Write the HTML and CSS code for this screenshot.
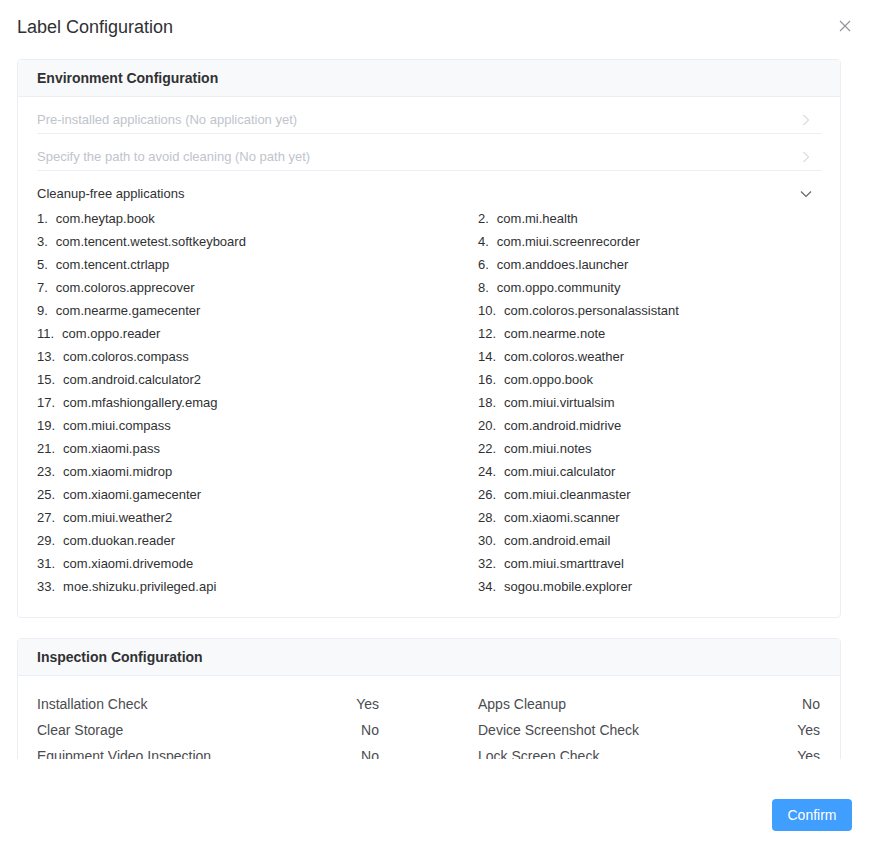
FILE: index.html
```html
<!DOCTYPE html>
<html lang="en">
<head>
    <meta charset="UTF-8">
    <meta name="viewport" content="width=device-width, initial-scale=1.0">
    <title>Label Configuration</title>
    <link rel="stylesheet" href="styles.css">
</head>
<body>
    <div class="dialog">
        <div class="dialog-header">
            <span class="dialog-title">Label Configuration</span>
            <button class="close-btn" aria-label="Close">
                <svg width="12" height="12" viewBox="0 0 12 12"><path d="M1 1L11 11M11 1L1 11" stroke="#909399" stroke-width="1.1" fill="none"/></svg>
            </button>
        </div>

        <div class="dialog-body">
            <div class="card">
                <div class="card-header">Environment Configuration</div>
                <div class="card-body env">
                    <div class="collapse-row disabled">
                        <span>Pre-installed applications (No application yet)</span>
                        <svg class="arrow" width="12" height="12" viewBox="0 0 12 12"><path d="M3.5 1L8.5 6L3.5 11" stroke="#c0c4cc" stroke-width="1" fill="none"/></svg>
                    </div>
                    <div class="collapse-row disabled">
                        <span>Specify the path to avoid cleaning (No path yet)</span>
                        <svg class="arrow" width="12" height="12" viewBox="0 0 12 12"><path d="M3.5 1L8.5 6L3.5 11" stroke="#c0c4cc" stroke-width="1" fill="none"/></svg>
                    </div>
                    <div class="collapse-row open">
                        <span>Cleanup-free applications</span>
                        <svg class="arrow" width="12" height="12" viewBox="0 0 12 12"><path d="M1 3.5L6 8.5L11 3.5" stroke="#606266" stroke-width="1.1" fill="none"/></svg>
                    </div>
                    <ol class="app-list"></ol>
                </div>
            </div>

            <div class="card">
                <div class="card-header">Inspection Configuration</div>
                <div class="card-body inspect">
                    <div class="check-grid">
                        <div class="check"><span>Installation Check</span><span>Yes</span></div>
                        <div class="check"><span>Apps Cleanup</span><span>No</span></div>
                        <div class="check"><span>Clear Storage</span><span>No</span></div>
                        <div class="check"><span>Device Screenshot Check</span><span>Yes</span></div>
                        <div class="check"><span>Equipment Video Inspection</span><span>No</span></div>
                        <div class="check"><span>Lock Screen Check</span><span>Yes</span></div>
                        <div class="check"><span>Network Check</span><span>Yes</span></div>
                        <div class="check"><span>Battery Check</span><span>No</span></div>
                    </div>
                </div>
            </div>
        </div>

        <div class="dialog-footer">
            <button class="confirm-btn">Confirm</button>
        </div>
    </div>

    <script>
        const apps = [
            'com.heytap.book', 'com.mi.health',
            'com.tencent.wetest.softkeyboard', 'com.miui.screenrecorder',
            'com.tencent.ctrlapp', 'com.anddoes.launcher',
            'com.coloros.apprecover', 'com.oppo.community',
            'com.nearme.gamecenter', 'com.coloros.personalassistant',
            'com.oppo.reader', 'com.nearme.note',
            'com.coloros.compass', 'com.coloros.weather',
            'com.android.calculator2', 'com.oppo.book',
            'com.mfashiongallery.emag', 'com.miui.virtualsim',
            'com.miui.compass', 'com.android.midrive',
            'com.xiaomi.pass', 'com.miui.notes',
            'com.xiaomi.midrop', 'com.miui.calculator',
            'com.xiaomi.gamecenter', 'com.miui.cleanmaster',
            'com.miui.weather2', 'com.xiaomi.scanner',
            'com.duokan.reader', 'com.android.email',
            'com.xiaomi.drivemode', 'com.miui.smarttravel',
            'moe.shizuku.privileged.api', 'sogou.mobile.explorer'
        ];

        const list = document.querySelector('.app-list');
        apps.forEach((name, i) => {
            const li = document.createElement('li');
            li.innerHTML = `<span class="num">${i + 1}.</span><span>${name}</span>`;
            list.appendChild(li);
        });
    </script>
</body>
</html>
```

FILE: styles.css
```css
* {
    margin: 0;
    padding: 0;
    box-sizing: border-box;
    font-family: 'Liberation Sans', Arial, sans-serif;
}

body {
    background: #fff;
    color: #606266;
}

.dialog {
    width: 869px;
    height: 848px;
    display: flex;
    flex-direction: column;
}

.dialog-header {
    display: flex;
    justify-content: space-between;
    align-items: center;
    padding: 17px 18px 0 17px;
    height: 37px;
}

.dialog-title {
    font-size: 18px;
    line-height: 20px;
    color: #303133;
}

.close-btn {
    border: none;
    background: none;
    width: 12px;
    height: 12px;
    display: flex;
    margin-top: -2px;
    cursor: pointer;
}

.dialog-body {
    height: 722px;
    overflow: hidden;
    padding: 22px 28px 0 17px;
}

.card {
    border: 1px solid #ebeef5;
    border-radius: 4px;
    margin-bottom: 20px;
}

.card-header {
    height: 37px;
    line-height: 36px;
    padding: 0 19px;
    background: #f8f9fb;
    border-bottom: 1px solid #ebeef5;
    font-size: 14px;
    font-weight: bold;
    color: #303133;
}

.card-body {
    padding: 0 19px 19px;
}

.collapse-row {
    display: flex;
    justify-content: space-between;
    align-items: center;
    padding: 14px 0 4px;
    line-height: 18px;
    font-size: 13px;
    border-bottom: 1px solid #ebeef5;
    height: 37px;
}

.collapse-row .arrow {
    margin-right: 9px;
}

.collapse-row.disabled {
    color: #c0c4cc;
}

.collapse-row.open {
    border-bottom: none;
    height: 36px;
    color: #303133;
}

.app-list {
    list-style: none;
    display: grid;
    grid-template-columns: 342px 342px;
    column-gap: 99px;
    font-size: 13px;
    color: #303133;
}

.app-list li {
    height: 23px;
    line-height: 23px;
    white-space: nowrap;
}

.app-list .num {
    margin-right: 8px;
}

.inspect {
    padding-top: 15px;
}

.check-grid {
    display: grid;
    grid-template-columns: 342px 342px;
    column-gap: 99px;
    font-size: 14px;
}

.check {
    display: flex;
    justify-content: space-between;
    height: 26px;
    line-height: 26px;
    color: #4a4c50;
}

.dialog-footer {
    display: flex;
    justify-content: flex-end;
    padding: 40px 17px 0;
}

.confirm-btn {
    width: 80px;
    height: 32px;
    border: none;
    border-radius: 4px;
    background: #409eff;
    color: #fff;
    font-size: 14px;
    cursor: pointer;
}
```
